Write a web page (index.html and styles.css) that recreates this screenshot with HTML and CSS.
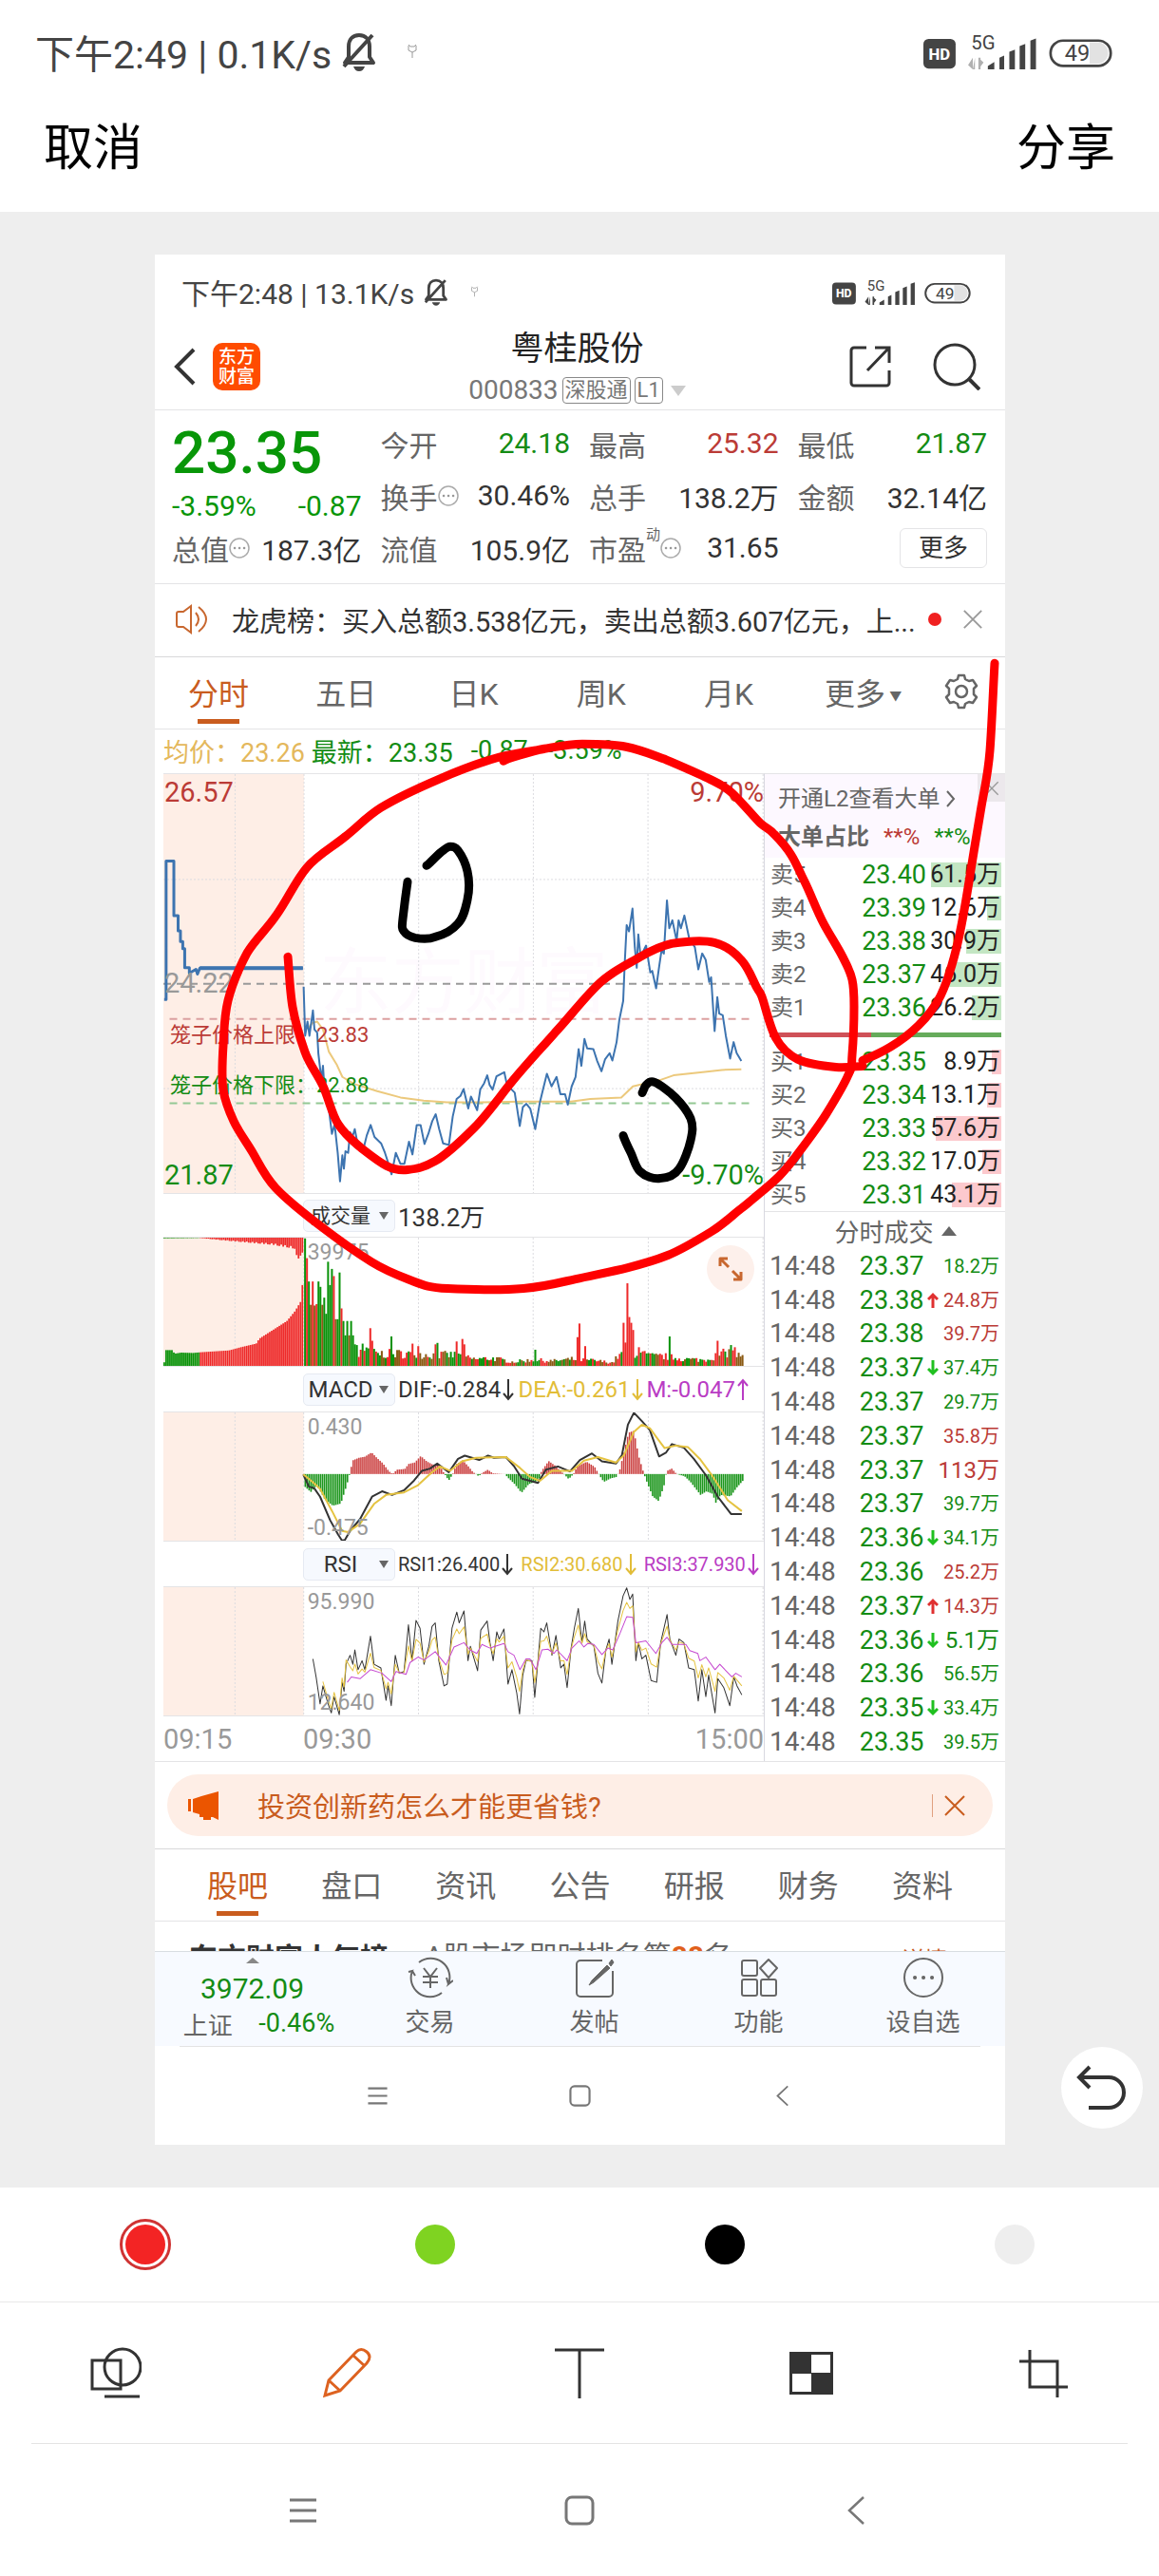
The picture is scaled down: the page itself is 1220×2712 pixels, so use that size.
FILE: index.html
```
<!DOCTYPE html><html lang="zh-CN"><head><meta charset="utf-8"/>
<meta name="viewport" content="width=device-width, initial-scale=1.0"/>
<title>编辑截图</title>
<link rel="stylesheet" href="styles.css">
<script src="script.js" defer></script>
</head>
<body>

<svg class="sprite" aria-hidden="true">
  <symbol id="i-bell" viewBox="0 0 40 42">
    <path d="M9 27V16C9 9 13 4 20 4s11 5 11 12v11l4 6H5zM34 4 4 37" fill="none" stroke="currentColor" stroke-width="4" stroke-linejoin="round"/>
    <path d="M14 37h12c-1 3-3 5-6 5s-5-2-6-5z" fill="currentColor"/>
  </symbol>
  <symbol id="i-pin" viewBox="0 0 12 16">
    <path d="M2 1l2 2h4l2-2M2 2v5l4 2 4-2V2M6 9v6" fill="none" stroke="currentColor" stroke-width="1"/>
  </symbol>
  <symbol id="i-dots" viewBox="0 0 22 22">
    <circle cx="11" cy="11" r="10" fill="none" stroke="#aaa" stroke-width="1.5"/>
    <path d="M6 11h.1M11 11h.1M16 11h.1" stroke="#999" stroke-width="2.5" stroke-linecap="round"/>
  </symbol>
  <symbol id="i-x" viewBox="0 0 24 24">
    <path d="M2 2l20 20M22 2L2 22" fill="none" stroke="currentColor" stroke-width="2"/>
  </symbol>
  <symbol id="i-down" viewBox="0 0 12 24">
    <path d="M6 1v21M1 16l5 6 5-6" fill="none" stroke="currentColor" stroke-width="2"/>
  </symbol>
  <symbol id="i-up" viewBox="0 0 12 24">
    <path d="M6 23V2M1 8l5-6 5 6" fill="none" stroke="currentColor" stroke-width="2"/>
  </symbol>
  <symbol id="i-menu" viewBox="0 0 32 32">
    <path d="M2 5h28M2 16h28M2 27h28" stroke="currentColor" stroke-width="3" fill="none"/>
  </symbol>
  <symbol id="i-home" viewBox="0 0 32 32">
    <rect x="2" y="2" width="28" height="28" rx="6" fill="none" stroke="currentColor" stroke-width="3"/>
  </symbol>
  <symbol id="i-back" viewBox="0 0 32 32">
    <path d="M24 2L9 16l15 14" fill="none" stroke="currentColor" stroke-width="2.5"/>
  </symbol>
</svg>

<header class="editor-head">
  <div class="status">
    <span>下午2:49 | 0.1K/s</span>
    <svg class="bell"><use href="#i-bell"/></svg>
    <svg class="pin"><use href="#i-pin"/></svg>
    <svg class="signal" viewBox="48 36 440 86">
      <rect x="48" y="49" width="75" height="69" rx="12" fill="currentColor"/>
      <text x="85" y="97" text-anchor="middle" font-size="37" font-weight="800" fill="#fff">HD</text>
      <text x="159" y="74" font-size="45" fill="currentColor">5G</text>
      <path d="M163 93v27l-11-10M163 120h5V93zM176 120V93l12 11M176 93h5v27h-5" fill="#b0b0b0"/>
      <path d="M198 120v-8l15-9v17zM225 120V93l11-5v32zM248 120V79l13-5v46zM272 120V66l13-5v59zM297 120V53l13-5v72z" fill="currentColor"/>
      <path d="M435 57h18a25 25 0 0 1 0 50h-18z" fill="#e2e2e2"/>
      <rect x="344" y="53" width="140" height="59" rx="29" fill="none" stroke="currentColor" stroke-width="6"/>
      <text x="406" y="101" text-anchor="middle" font-size="52" fill="currentColor">49</text>
    </svg>
  </div>
  <div class="actions">
    <button type="button">取消</button>
    <button type="button">分享</button>
  </div>
</header>

<main class="canvas">
  <div class="phone">
    <div class="status small">
      <span>下午2:48 | 13.1K/s</span>
      <svg class="bell"><use href="#i-bell"/></svg>
      <svg class="pin"><use href="#i-pin"/></svg>
      <svg class="signal" viewBox="48 36 440 86">
        <rect x="48" y="49" width="75" height="69" rx="12" fill="currentColor"/>
        <text x="85" y="97" text-anchor="middle" font-size="37" font-weight="800" fill="#fff">HD</text>
        <text x="159" y="74" font-size="45" fill="currentColor">5G</text>
        <path d="M163 93v27l-11-10M163 120h5V93zM176 120V93l12 11M176 93h5v27h-5" fill="currentColor"/>
        <path d="M198 120v-8l15-9v17zM225 120V93l11-5v32zM248 120V79l13-5v46zM272 120V66l13-5v59zM297 120V53l13-5v72z" fill="currentColor"/>
        <path d="M435 57h18a25 25 0 0 1 0 50h-18z" fill="#e2e2e2"/>
        <rect x="344" y="53" width="140" height="59" rx="29" fill="none" stroke="currentColor" stroke-width="6"/>
        <text x="406" y="101" text-anchor="middle" font-size="52" fill="currentColor">49</text>
      </svg>
    </div>

    <div class="stock-head">
      <div class="head-left">
        <button type="button" aria-label="返回"><svg width="24" height="40" viewBox="0 0 24 40"><path d="M21 2L3 20l18 18" fill="none" stroke="#333" stroke-width="4"/></svg></button>
        <button type="button" class="logo">东方<br>财富</button>
      </div>
      <div class="head-title">
        <h1>粤桂股份</h1>
        <div class="code">000833 <span class="tag">深股通</span><span class="tag">L1</span><i class="caret"></i></div>
      </div>
      <div class="head-right">
        <button type="button" aria-label="分享"><svg width="44" height="44" viewBox="0 0 44 44"><path d="M18 2H5a3 3 0 0 0-3 3v34a3 3 0 0 0 3 3h34a3 3 0 0 0 3-3V26M27 2h15v16M41 3L19 26" fill="none" stroke="#333" stroke-width="3"/></svg></button>
        <button type="button" aria-label="搜索"><svg width="50" height="50" viewBox="0 0 50 50"><circle cx="23" cy="23" r="21" fill="none" stroke="#333" stroke-width="3"/><path d="M38 38l11 11" stroke="#333" stroke-width="4"/></svg></button>
      </div>
    </div>

    <section class="quote">
      <div class="price">
        <strong>23.35</strong>
        <div class="change"><span>-3.59%</span><span>-0.87</span></div>
      </div>
      <div class="cell"><span>今开</span><b class="down">24.18</b></div>
      <div class="cell"><span>最高</span><b class="up">25.32</b></div>
      <div class="cell"><span>最低</span><b class="down">21.87</b></div>
      <div class="cell"><span>换手<svg class="dots"><use href="#i-dots"/></svg></span><b>30.46%</b></div>
      <div class="cell"><span>总手</span><b>138.2万</b></div>
      <div class="cell"><span>金额</span><b>32.14亿</b></div>
      <div class="cell"><span>总值<svg class="dots"><use href="#i-dots"/></svg></span><b>187.3亿</b></div>
      <div class="cell"><span>流值</span><b>105.9亿</b></div>
      <div class="cell"><span>市盈<sup>动</sup><svg class="dots"><use href="#i-dots"/></svg></span><b>31.65</b></div>
      <div class="cell end"><button type="button" class="more">更多</button></div>
    </section>

    <div class="notice">
      <svg width="36" height="32" viewBox="0 0 36 32"><path d="M2 10q0-2 2-2h5l8-6v28l-8-6H4q-2 0-2-2zM22 9q6 7 0 14M25 3q16 13 0 26" fill="none" stroke="#c8672f" stroke-width="2"/></svg>
      <p>龙虎榜：买入总额3.538亿元，卖出总额3.607亿元，上...</p>
      <i class="dot"></i>
      <button type="button" aria-label="关闭"><svg width="22" height="22"><use href="#i-x"/></svg></button>
    </div>

    <nav class="periods">
      <button type="button" class="on">分时</button>
      <button type="button">五日</button>
      <button type="button">日K</button>
      <button type="button">周K</button>
      <button type="button">月K</button>
      <button type="button">更多<small>▼</small></button>
      <button type="button" class="gear" aria-label="设置"><svg width="38" height="38" viewBox="0 0 38 38"><path d="M16 2h6l1 4 4 2 4-1 4 6-3 3v6l3 3-4 6-4-1-4 2-1 4h-6l-1-4-4-2-4 1-4-6 3-3v-6l-3-3 4-6 4 1 4-2z" fill="none" stroke="#666" stroke-width="2.5" stroke-linejoin="round"/><circle cx="19" cy="19" r="6" fill="none" stroke="#666" stroke-width="2.5"/></svg></button>
    </nav>

    <div class="summary">
      <span class="avg">均价：23.26</span>
      <span>最新：23.35</span>
      <span>-0.87</span>
      <span>-3.59%</span>
    </div>

    <div class="market">
      <div class="charts">
        <div class="plot plot-price">
          <span class="watermark">东方财富</span>
          <svg id="price" viewBox="28 43 1550 1324" preserveAspectRatio="none"></svg>
          <span class="lab tl up">26.57</span>
          <span class="lab tr up">9.70%</span>
          <span class="lab mid">24.22</span>
          <span class="lab bl down">21.87</span>
          <span class="lab br down">-9.70%</span>
          <span class="cage up hi">笼子价格上限：23.83</span>
          <span class="cage down lo">笼子价格下限：22.88</span>
        </div>
        <div class="bar">
          <span class="pick"><select class="cjk" aria-label="指标一"><option>成交量</option></select></span>
          <span class="total">138.2万</span>
        </div>
        <div class="plot plot-volume">
          <svg id="volume" viewBox="28 137 1502 357" preserveAspectRatio="none"></svg>
          <span class="num top">39975</span>
          <button type="button" class="expand" aria-label="展开"><svg width="26" height="26" viewBox="0 0 26 26"><path d="M2 10V2h8M2 2l9 9M24 16v8h-8M24 24l-9-9" fill="none" stroke="#c8672f" stroke-width="3"/></svg></button>
        </div>
        <div class="bar tall">
          <span class="pick"><select aria-label="指标二"><option>MACD</option></select></span>
          <span class="ind">DIF:-0.284<svg><use href="#i-down"/></svg></span>
          <span class="ind yellow">DEA:-0.261<svg><use href="#i-down"/></svg></span>
          <span class="ind purple">M:-0.047<svg><use href="#i-up"/></svg></span>
        </div>
        <div class="plot plot-macd">
          <svg id="macd" viewBox="28 616 1502 356" preserveAspectRatio="none"></svg>
          <span class="num top">0.430</span>
          <span class="num bottom">-0.475</span>
        </div>
        <div class="bar tall narrow">
          <span class="pick"><select aria-label="指标三"><option>RSI</option></select></span>
          <span class="ind">RSI1:26.400<svg><use href="#i-down"/></svg></span>
          <span class="ind yellow">RSI2:30.680<svg><use href="#i-down"/></svg></span>
          <span class="ind purple">RSI3:37.930<svg><use href="#i-down"/></svg></span>
        </div>
        <div class="plot plot-rsi">
          <svg id="rsi" viewBox="28 1096 1502 356" preserveAspectRatio="none"></svg>
          <span class="num top">95.990</span>
          <span class="num bottom">12.640</span>
        </div>
        <div class="axis"><span>09:15</span><span>09:30</span><span>15:00</span></div>
      </div>

      <aside class="book">
        <div class="level2">
          <a href="#l2">开通L2查看大单<svg width="10" height="18" viewBox="0 0 10 18"><path d="M1 1l7 8-7 8" fill="none" stroke="#666" stroke-width="2"/></svg></a>
          <div class="ratio"><b>大单占比</b><span class="up">**%</span><span class="down">**%</span></div>
          <button type="button" class="shut" aria-label="关闭"><svg width="16" height="16"><use href="#i-x"/></svg></button>
        </div>
        <table class="orders" id="asks"></table>
        <div class="balance"><i></i></div>
        <table class="orders" id="bids"></table>
        <button type="button" class="trades-head">分时成交<i></i></button>
        <table class="trades" id="trades"></table>
      </aside>
    </div>

    <div class="promo">
      <div class="pill">
        <svg width="36" height="32" viewBox="0 0 36 32"><path d="M2 9h3v13H2zM7 9l9-3 18-5v30l-6-3-2 0v3h-8v-3h-4v-3l-7-2z" fill="#eb5500"/></svg>
        <a href="#promo">投资创新药怎么才能更省钱?</a>
        <button type="button" aria-label="关闭"><svg width="24" height="24"><use href="#i-x"/></svg></button>
      </div>
    </div>

    <nav class="sections">
      <button type="button" class="on">股吧</button>
      <button type="button">盘口</button>
      <button type="button">资讯</button>
      <button type="button">公告</button>
      <button type="button">研报</button>
      <button type="button">财务</button>
      <button type="button">资料</button>
    </nav>

    <div class="rank">
      <b>东方财富人气榜</b>
      <span>A股市场即时排名第<em>88</em>名</span>
      <a href="#rank">详情&gt;&gt;</a>
    </div>

    <div class="toolbar">
      <a class="index" href="#index">
        <i></i>
        <strong>3972.09</strong>
        <span>上证</span><b>-0.46%</b>
      </a>
      <button type="button"><svg width="48" height="44" viewBox="0 0 48 44"><path d="M12 6a20 20 0 0 1 31 23l5-4M43 29l-2-7M36 38A20 20 0 0 1 5 15l-4 1M5 15l3 5" fill="none" stroke="#666" stroke-width="2"/><path d="M17 12l7 9 7-9M24 21v12M16 21h16M16 27h16" fill="none" stroke="#666" stroke-width="2"/></svg>交易</button>
      <button type="button"><svg width="42" height="44" viewBox="0 0 42 44"><path d="M29 4H6a4 4 0 0 0-4 4v30a4 4 0 0 0 4 4h30a4 4 0 0 0 4-4V15" fill="none" stroke="#666" stroke-width="2"/><path d="M34 9L18 25l-3 5 5-3 17-15zM36 7l3-4 2 3-3 4z" fill="#666" stroke="#666"/></svg>发帖</button>
      <button type="button"><svg width="42" height="44" viewBox="0 0 42 44"><g fill="none" stroke="#666" stroke-width="2"><rect x="3" y="4" width="16" height="16" rx="2"/><rect x="3" y="24" width="16" height="17" rx="2"/><rect x="23" y="24" width="16" height="17" rx="2"/><path d="M31 3l9 9-9 10-9-10z" stroke-linejoin="round"/></g></svg>功能</button>
      <button type="button"><svg width="42" height="44" viewBox="0 0 42 44"><circle cx="21" cy="22" r="20" fill="none" stroke="#666" stroke-width="2"/><path d="M12 22h.1M21 22h.1M30 22h.1" stroke="#666" stroke-width="4" stroke-linecap="round"/></svg>设自选</button>
    </div>

    <div class="keys small">
      <svg><use href="#i-menu"/></svg>
      <svg><use href="#i-home"/></svg>
      <svg><use href="#i-back"/></svg>
    </div>

    <svg class="ink" id="ink" viewBox="163 268 895 1989" preserveAspectRatio="none"></svg>
  </div>
  <button type="button" class="undo" aria-label="撤销"><svg width="54" height="48" viewBox="0 0 54 48"><path d="M14 2L3 13l11 11M3 13h31a16 16 0 0 1 0 32H13" fill="none" stroke="#333" stroke-width="4"/></svg></button>
</main>

<footer class="panel">
  <div class="palette">
    <label><input type="radio" name="ink" class="red" checked aria-label="红色"></label>
    <label><input type="radio" name="ink" class="green" aria-label="绿色"></label>
    <label><input type="radio" name="ink" class="black" aria-label="黑色"></label>
    <label><input type="radio" name="ink" class="grey" aria-label="浅灰"></label>
  </div>
  <div class="tools">
    <button type="button" aria-label="形状"><svg viewBox="0 0 54 54"><path d="M2 14h30v30H2z"/><circle cx="34" cy="21" r="19"/><path d="M15 52h37"/></svg></button>
    <button type="button" aria-label="画笔" class="on"><svg viewBox="0 0 54 54"><path d="M3 51l4-16L36 5q5-5 11 0t0 12L19 46zM7 35l12 11M33 9l12 11"/></svg></button>
    <button type="button" aria-label="文字"><svg viewBox="0 0 54 54"><path d="M1 3h52M27 3v51"/></svg></button>
    <button type="button" aria-label="马赛克"><svg viewBox="0 0 54 54"><path d="M4 5h46v45H4z" fill="#333" stroke="none"/><path d="M27 8h20v19H27zM7 28h20v19H7z" fill="#fff" stroke="none"/></svg></button>
    <button type="button" aria-label="裁剪"><svg viewBox="0 0 54 54"><path d="M13 3v39h40M2 15h40v38"/></svg></button>
  </div>
  <div class="keys">
    <svg><use href="#i-menu"/></svg>
    <svg><use href="#i-home"/></svg>
    <svg><use href="#i-back"/></svg>
  </div>
</footer>

</body>
</html>
```
FILE: styles.css
```
* {
  box-sizing: border-box;
}
body {
  margin: 0;
  font-family: Roboto, "Noto Sans CJK SC", sans-serif;
  color: #333;
  background: #fff;
  --red: #bb3b36;
  --green: #148c14;
  --orange: #c95c1e;
  --line: #e4e4e6;
}
button {
  border: 0;
  padding: 0;
  background: none;
  font: inherit;
  color: inherit;
}
a {
  color: inherit;
  text-decoration: none;
}
i {
  display: block;
}
svg {
  display: block;
}
table {
  width: 100%;
  border-collapse: collapse;
}
.sprite {
  position: absolute;
  width: 0;
  height: 0;
}
.up {
  color: var(--red);
}
.down {
  color: var(--green);
}

/* status bar, used by the editor and by the phone */
.status {
  display: flex;
  align-items: center;
  height: 108px;
  padding: 0 49px 0 37px;
  font-size: 41px;
  color: #444;
  white-space: nowrap;
}
.status .bell {
  width: 40px;
  height: 42px;
  margin-left: 9px;
}
.status .pin {
  width: 12px;
  height: 16px;
  margin-left: 30px;
  color: #999;
}
.status .signal {
  width: 199px;
  height: 39px;
  margin-left: auto;
}
.status.small {
  height: 72px;
  padding: 6px 36px 0 28px;
  font-size: 30px;
}
.status.small .bell {
  width: 28px;
  height: 30px;
}
.status.small .pin {
  margin-left: 22px;
  width: 9px;
}
.status.small .signal {
  width: 146px;
  height: 29px;
}
.actions {
  display: flex;
  justify-content: space-between;
  align-items: center;
  height: 115px;
  padding: 0 46px 28px;
  font-size: 52px;
  color: #000;
}

/* canvas */
.canvas {
  position: relative;
  padding: 45px 162px 45px 163px;
  background: #eee;
}
.phone {
  position: relative;
  background: #fff;
}
.ink {
  position: absolute;
  inset: 0;
  width: 100%;
  height: 100%;
  fill: none;
  stroke: #f00;
  stroke-width: 9;
  stroke-linecap: round;
  stroke-linejoin: round;
  pointer-events: none;
}
.ink .black {
  stroke: #000;
}
.undo {
  position: absolute;
  right: 17px;
  bottom: 62px;
  display: grid;
  place-items: center;
  width: 86px;
  height: 86px;
  border-radius: 50%;
  background: #fff;
}

/* stock header */
.stock-head {
  display: grid;
  grid-template-columns: 1fr auto 1fr;
  align-items: center;
  height: 92px;
  padding: 0 26px 10px 20px;
  border-bottom: 1px solid var(--line);
}
.head-left, .head-right {
  display: flex;
  align-items: center;
  gap: 17px;
}
.head-right {
  justify-content: flex-end;
  gap: 44px;
}
.logo {
  width: 50px;
  height: 50px;
  border-radius: 10px;
  background: #ff4c00;
  color: #fff;
  font-size: 19px;
  font-weight: 500;
  line-height: 21px;
}
.head-title {
  padding-top: 6px;
  text-align: center;
}
h1 {
  margin: 0;
  font-size: 35px;
  font-weight: 400;
  line-height: 44px;
  color: #222;
}
.code {
  display: flex;
  align-items: center;
  gap: 4px;
  font-size: 28px;
  line-height: 42px;
  color: #777;
}
.tag {
  padding: 0 2px;
  border: 1px solid #888;
  border-radius: 4px;
  font-size: 22px;
  line-height: 26px;
}
.caret {
  margin-left: 4px;
  border: 8px solid transparent;
  border-top: 11px solid #ccc;
  border-bottom: 0;
}

/* quote */
.quote {
  display: grid;
  grid-template-columns: repeat(4, 1fr);
  grid-template-rows: repeat(3, 55px);
  column-gap: 20px;
  height: 183px;
  padding: 7px 19px 0 18px;
  border-bottom: 1px solid var(--line);
  font-size: 30px;
}
.price {
  grid-row: 1 / 3;
  color: #089608;
}
.price strong {
  display: block;
  font-size: 62px;
  line-height: 76px;
  font-weight: 500;
}
.change {
  display: flex;
  justify-content: space-between;
  line-height: 36px;
}
.cell {
  display: flex;
  justify-content: space-between;
  align-items: center;
  white-space: nowrap;
}
.cell span {
  display: flex;
  align-items: center;
  color: #666;
}
.cell b {
  font-weight: 400;
}
.cell sup {
  align-self: flex-start;
  font-size: 15px;
  line-height: 16px;
}
.cell.end {
  justify-content: flex-end;
}
.dots {
  width: 22px;
  height: 22px;
}
.more {
  width: 92px;
  height: 42px;
  border: 1px solid var(--line);
  border-radius: 6px;
  font-size: 26px;
  line-height: 36px;
}

.notice {
  display: flex;
  align-items: center;
  height: 77px;
  padding: 0 23px 2px 21px;
  border-bottom: 1px solid #d8d8da;
}
.notice p {
  flex: 1;
  margin: 0 0 0 24px;
  font-size: 29px;
  white-space: nowrap;
}
.notice .dot {
  width: 14px;
  height: 14px;
  margin-right: 22px;
  border-radius: 50%;
  background: #f02020;
}
.notice button {
  color: #999;
}

/* tabs */
.periods, .sections {
  display: flex;
  height: 76px;
  border-bottom: 1px solid var(--line);
  font-size: 32px;
  color: #666;
}
.periods button, .sections button {
  padding-bottom: 3px;
}
.periods button {
  width: 15%;
}
.periods button:nth-child(6) {
  flex: 1;
  padding-right: 10px;
}
.periods small {
  margin-left: 4px;
  font-size: 13px;
  vertical-align: 5px;
}
.periods .gear {
  width: auto;
  margin-right: 27px;
}
.sections {
  padding: 0 27px;
}
.sections button {
  flex: 1;
}
.periods .on, .sections .on {
  color: var(--orange);
  background: linear-gradient(var(--orange), var(--orange)) center bottom 5px / 44px 5px no-repeat;
}

.summary {
  display: flex;
  align-items: center;
  height: 46px;
  padding: 0 0 2px 9px;
  gap: 19px;
  font-size: 27px;
  color: var(--green);
}
.summary .avg {
  margin-right: -12px;
  color: #e4b85c;
}

/* charts and order book */
.market {
  display: grid;
  grid-template-columns: 641fr 254fr;
  border-bottom: 1px solid var(--line);
}
.charts {
  min-width: 0;
  padding-left: 9px;
}
.plot {
  position: relative;
  border: solid var(--line);
  border-width: 1px 0;
}
.plot > svg {
  position: relative;
  width: 100%;
  height: 100%;
}
.plot-price {
  height: 443px;
}
.plot-volume, .plot-macd, .plot-rsi {
  height: 137px;
}
.plot path, .plot line {
  fill: none;
  stroke-width: 2;
  vector-effect: non-scaling-stroke;
  stroke-linejoin: round;
}
.plot .expand path {
  stroke-width: 3;
}
.plot .grid {
  stroke: #dcdce0;
  stroke-width: 1;
  stroke-dasharray: 2 2;
}
.plot .wash {
  fill: #feeee6;
}
.plot .dash {
  stroke-dasharray: 8 6;
}
.lab, .cage, .num, .watermark {
  position: absolute;
  line-height: 1;
}
.lab {
  font-size: 29px;
}
.tl, .mid, .bl {
  left: 1px;
}
.tr, .br {
  right: 0;
}
.tl, .tr {
  top: 5px;
}
.bl, .br {
  bottom: 4px;
}
.mid {
  top: 206px;
  color: #999;
}
.cage {
  left: 7px;
  font-size: 22px;
}
.hi {
  top: 264px;
}
.lo {
  top: 317px;
}
.num {
  left: 24%;
  font-size: 23px;
  color: #999;
}
.num.top {
  top: 4px;
}
.num.bottom {
  bottom: 2px;
}
.watermark {
  left: 26%;
  top: 182px;
  font-size: 76px;
  color: #fefafe;
}
.expand {
  position: absolute;
  right: 10px;
  top: 8px;
  display: grid;
  place-items: center;
  width: 50px;
  height: 50px;
  border-radius: 50%;
  background: #fdf0eb;
}
.bar {
  display: grid;
  grid-template-columns: 97px repeat(3, 1fr);
  align-items: center;
  column-gap: 3px;
  height: 45px;
  padding-left: 147px;
}
.bar.tall {
  height: 47px;
}
.pick {
  position: relative;
}
.pick select {
  width: 100%;
  height: 34px;
  padding: 0 20px 0 2px;
  border: 1px solid #e6eaf2;
  border-radius: 5px;
  background: #f6f9fe;
  appearance: none;
  text-align: center;
  text-align-last: center;
  font: 24px Roboto, "Noto Sans CJK SC", sans-serif;
  color: #333;
}
.pick .cjk {
  font-size: 21px;
}
.pick::after {
  content: "";
  position: absolute;
  right: 7px;
  top: 13px;
  border: 5px solid transparent;
  border-top: 8px solid #666;
  border-bottom: 0;
}
.total {
  font-size: 26px;
}
.ind {
  display: flex;
  align-items: center;
  gap: 2px;
  font-size: 24px;
  white-space: nowrap;
}
.ind svg {
  width: 12px;
  height: 24px;
}
.narrow .ind {
  font-size: 20px;
}
.yellow {
  color: #e2bd38;
}
.purple {
  color: #b93cc4;
}
.axis {
  display: flex;
  align-items: center;
  height: 47px;
  font-size: 29px;
  color: #999;
}
.axis span:first-child {
  width: 147px;
}
.axis span:last-child {
  margin-left: auto;
}

.book {
  min-width: 0;
  border-left: 1px solid #d8d8e0;
  border-top: 1px solid var(--line);
  color: #666;
  white-space: nowrap;
}
.level2 {
  position: relative;
  height: 88px;
  padding: 6px 0 0 14px;
  background: #fdf8ff;
}
.level2 a {
  display: flex;
  align-items: center;
  gap: 7px;
  font-size: 24px;
  line-height: 40px;
}
.ratio {
  display: flex;
  gap: 15px;
  font-size: 24px;
  line-height: 40px;
}
.shut {
  position: absolute;
  right: 0;
  top: 0;
  display: grid;
  place-items: center;
  width: 29px;
  height: 29px;
  border-radius: 0 0 0 8px;
  background: #ece8ec;
  color: #999;
}
.orders td {
  height: 35px;
  padding: 0;
  line-height: 34px;
}
.orders td:first-child {
  padding-left: 6px;
  font-size: 24px;
}
.orders .rate, .trades .rate {
  text-align: right;
  font-size: 27px;
  color: var(--green);
}
.orders .vol {
  position: relative;
  width: 83px;
  padding-right: 5px;
  text-align: right;
  font-size: 25px;
  color: #222;
}
.orders .vol span {
  position: relative;
}
.depth {
  position: absolute;
  right: 4px;
  top: 5px;
  height: 26px;
  background: #fcc9cd;
}
#asks .depth {
  background: #c3e6c3;
}
.balance {
  margin: 9px 4px 8px 5px;
  height: 5px;
  background: #66ab5b;
}
.balance i {
  width: 44%;
  height: 5px;
  background: #cf5158;
}
.trades-head {
  display: flex;
  justify-content: center;
  align-items: center;
  gap: 8px;
  width: 100%;
  height: 40px;
  padding-left: 22px;
  border-top: 1px solid var(--line);
  font-size: 26px;
}
.trades-head i {
  border: 8px solid transparent;
  border-bottom: 10px solid #666;
  border-top: 0;
}
.trades {
  height: 537px;
}
.trades td {
  padding: 0;
  font-size: 28px;
  line-height: 34px;
}
.trades td:first-child {
  padding-left: 5px;
}
.trades .arrow {
  width: 15px;
  padding-left: 3px;
}
.trades .arrow svg {
  width: 12px;
  height: 18px;
}
.trades .arrow path {
  fill: none;
  stroke: #e03030;
  stroke-width: 3;
}
.trades .arrow .fall {
  stroke: #20c020;
}
.trades .lot {
  width: 66px;
  padding-right: 6px;
  text-align: right;
  font-size: 20px;
}
.trades .big {
  font-size: 24px;
}

/* promo */
.promo {
  height: 92px;
  padding: 13px 13px 0;
  border-bottom: 1px solid #d8d8da;
}
.pill {
  display: flex;
  align-items: center;
  height: 65px;
  padding: 0 28px 0 20px;
  border-radius: 33px;
  background: #feeee6;
  color: var(--orange);
  font-size: 29px;
}
.pill a {
  margin: 0 auto 2px 39px;
}
.pill button {
  padding: 0 0 0 11px;
  border-left: 1px solid #e0a080;
}
.rank {
  display: flex;
  height: 31px;
  padding: 19px 36px 0;
  overflow: hidden;
  font-size: 30px;
  line-height: 40px;
}
.rank span {
  margin-left: 38px;
  font-size: 30px;
  line-height: 36px;
  color: #666;
}
.rank em {
  font-style: normal;
  font-weight: 700;
  color: #e0601c;
}
.rank a {
  margin-left: auto;
  font-size: 24px;
  line-height: 44px;
  color: var(--orange);
}

/* bottom bar */
.toolbar {
  display: grid;
  grid-template-columns: 203px repeat(4, 1fr);
  height: 100px;
  border-top: 1px solid #d8dde2;
  background: #f7faff;
  color: #666;
}
.index {
  display: grid;
  grid-template-columns: auto auto;
  grid-template-rows: 14px 44px 30px;
  align-items: center;
  justify-items: center;
  padding: 2px 0 0 16px;
  font-size: 26px;
}
.index i {
  grid-column: 1 / 3;
  border: 7px solid transparent;
  border-bottom: 6px solid #888;
  border-top: 0;
  margin-right: 14px;
}
.index strong {
  grid-column: 1 / 3;
  margin-right: 14px;
  font-size: 30px;
  font-weight: 400;
  color: var(--green);
}
.index b {
  font-size: 27px;
  font-weight: 400;
  color: var(--green);
}
.toolbar button {
  display: flex;
  flex-direction: column;
  align-items: center;
  gap: 7px;
  padding-top: 5px;
  font-size: 26px;
  line-height: 36px;
}

/* system keys */
.keys {
  display: flex;
  justify-content: space-between;
  align-items: center;
  height: 141px;
  margin: 0 33px 0 33px;
  padding: 0 270px;
  border-top: 1px solid #e4e4e4;
  color: #777;
}
.keys svg {
  width: 32px;
  height: 32px;
}
.keys.small {
  height: 104px;
  margin: 0 26px;
  padding: 0 197px;
}
.keys.small svg {
  width: 23px;
  height: 23px;
}

/* drawing tools */
.palette {
  display: flex;
  align-items: center;
  height: 121px;
  border-bottom: 1px solid #e8e8e8;
}
.palette label {
  flex: 1;
  display: grid;
  place-items: center;
}
.palette input {
  width: 42px;
  height: 42px;
  margin: 0;
  border-radius: 50%;
  appearance: none;
}
.palette input:checked {
  outline: 3px solid #cf3333;
  outline-offset: 3px;
}
.red {
  background: #f32424;
}
.green {
  background: #7fd321;
}
.palette .black {
  background: #000;
}
.grey {
  background: #eee;
}
.tools {
  display: flex;
  height: 148px;
}
.tools button {
  flex: 1;
  display: grid;
  place-items: center;
}
.tools svg {
  width: 54px;
  height: 54px;
  fill: none;
  stroke: #333;
  stroke-width: 3;
}
.tools .on svg {
  stroke: #dd6220;
}
```
FILE: script.js
```
const el = id => document.getElementById(id)

const toPoints = s => s.trim().split(/\s+/).map(p => p.split(',').map(Number))

const line = (s, color, width = 2) =>
  `<path d="M${s.trim().replace(/\s+/g, 'L')}" stroke="${color}" style="stroke-width:${width}px"/>`

// value at x on a list of [x, y] keys
const at = function(keys, x) {
  for (let i = 1; i < keys.length; i++) {
    const [x0, y0] = keys[i - 1]
    const [x1, y1] = keys[i]
    if (x <= x1) return y0 + (y1 - y0) * (x - x0) / (x1 - x0)
  }
  return keys[keys.length - 1][1]
}

const rect = (x, y, w, h, color) =>
  `<rect x="${x.toFixed(1)}" y="${y.toFixed(1)}" width="${w}" height="${h.toFixed(1)}" fill="${color}"/>`

const grid = function(xs, top, height, right) {
  let s = `<rect class="wash" x="28" y="${top}" width="${right}" height="${height}"/>`
  for (const x of xs) {
    s += `<line class="grid" x1="${x}" x2="${x}" y1="${top}" y2="${top + height}"/>`
  }
  return s
}

const drawPrice = function() {
  let s = grid([213, 391, 687, 983, 1279, 1576], 43, 1324, 363)
  for (const y of [376, 1037]) {
    s += `<line class="grid" x1="28" x2="1578" y1="${y}" y2="${y}"/>`
  }
  s += '<line class="dash" x1="28" x2="1578" y1="706" y2="706" stroke="#999"/>'
  s += '<line class="dash" x1="44" x2="1552" y1="817" y2="817" stroke="#dba0a0"/>'
  s += '<line class="dash" x1="44" x2="1552" y1="1083" y2="1083" stroke="#94c894"/>'
  s += line('30,755 35,755 35,318 55,318 55,490 66,490 66,538 72,538 72,572 78,572 78,595 83,595 83,655 95,655 95,672 112,660 116,675 122,656 388,656', '#3d74b0', 3)
  s += line('122,656 388,656', '#3d74b0', 4)
  s += line('400,850 412,830 425,825 440,850 455,920 475,960 490,1000 520,1022 580,1045 640,1065 700,1075 760,1080 850,1080 950,1078 1080,1078 1130,1070 1210,1065 1240,1030 1310,1010 1345,995 1420,985 1470,978 1520,976', '#ecc97c')
  s += line(`390,715 394,870 400,825 405,870 414,790 418,850 425,860 428,925 436,1010 440,965 445,1060 455,1100 463,1180 470,1150 478,1240
    484,1330 490,1248 494,1290 498,1235 505,1240 510,1175 516,1190 522,1165 530,1215 545,1225 553,1185 563,1152 573,1190 590,1210 600,1240
    608,1270 617,1308 628,1240 640,1275 650,1275 662,1205 671,1245 682,1152 692,1152 702,1212 712,1180 722,1140 731,1118 740,1165 750,1210
    765,1215 775,1125 785,1070 795,1060 803,1038 815,1100 822,1062 838,1105 846,1040 856,1020 864,995 870,1025 878,1040 888,998 908,985
    915,1025 935,1050 948,1155 956,1095 965,1085 975,1100 988,1165 1000,1080 1008,1040 1018,990 1030,1030 1043,1000 1053,1055 1065,1055
    1072,1088 1082,1030 1092,1000 1100,912 1107,965 1115,880 1122,910 1138,912 1148,950 1159,982 1168,945 1180,925 1187,948 1198,890
    1205,820 1215,760 1219,640 1224,520 1230,540 1239,468 1245,590 1250,655 1254,550 1260,620 1274,585 1285,670 1290,665 1300,720 1308,650
    1314,600 1320,610 1328,442 1334,530 1342,505 1353,570 1358,505 1364,530 1373,490 1385,560 1400,590 1409,660 1419,610 1428,630 1437,700
    1442,685 1451,855 1458,748 1463,800 1472,805 1480,870 1491,942 1500,890 1508,925 1520,950`, '#3d74b0')
  el('price').innerHTML = s
}

const RED = '#ee2a2a'
const GREEN = '#0a930a'
const MIX = '#8b5a14'

const drawVolume = function() {
  const base = 494
  let s = grid([207, 379, 666, 953, 1241, 1528], 137, 357, 351)

  // call auction, matched below and unmatched above
  const low = toPoints('28,10 32,44 48,44 54,34 70,37 100,36 120,38 190,43 220,52 258,62 266,76 300,100 335,125 355,152 370,180 374,230')
  const high = toPoints('28,2 118,1 180,8 240,14 300,20 350,30 368,66 374,40')
  for (let x = 28; x < 375; x += 4.8) {
    const color = x < 118 ? GREEN : RED
    const h = at(low, x)
    s += rect(x, base - h, 4.2, h, color)
    s += rect(x, 137, 4.2, at(high, x) * (Math.round(x) % 3 ? 1 : .8), color)
  }

  const first = '355g 300r 235g 170m 235r 168m 172r 235g 220g 170m 190g 145g 290g 225g 270g 250r 130m 130g 260g 160r 125g 85g 125g 85m 125g 85g 60g 58g 25r 45r 62g 42r'.split(' ')
  const env = toPoints('500,60 560,45 640,45 700,40 760,40 800,25 850,28 900,15 950,22 1000,18 1050,25 1100,20 1150,12 1165,40 1210,48 1250,35 1280,35 1330,25 1380,22 1410,38 1440,52 1478,30')
  const spikes = toPoints('545,105 550,70 598,82 650,62 664,55 705,60 712,64 760,68 775,75 780,60 957,45 1062,80 1067,118 1083,55 1178,120 1183,65 1188,230 1192,136 1197,120 1202,100 1216,52 1292,82 1412,70 1447,58 1457,52')
  let seed = 7
  const rnd = () => (seed = seed * 16807 % 2147483647) / 2147483647
  for (let i = 0, x = 380; x < 1476; i++, x += 4.8) {
    let h = at(env, x) * (.45 + rnd() * .6)
    let color = [RED, GREEN, MIX][Math.floor(rnd() * 3)]
    if (i < first.length) {
      h = parseInt(first[i])
      color = { r: RED, g: GREEN, m: MIX }[first[i].slice(-1)]
    }
    for (const [sx, sh] of spikes) {
      if (Math.abs(sx - x) < 2.4) {
        h = sh
        color = [598, 957, 1292, 712, 1447].includes(sx) ? GREEN : RED
      }
    }
    s += rect(x, base - h, 4.8, h, color)
  }
  el('volume').innerHTML = s
}

const drawMacd = function() {
  let s = grid([207, 379, 666, 953, 1241, 1528], 616, 356, 351)
  const hist = toPoints(`380,-35 395,-50 410,-30 430,-70 450,-88 470,-82 485,-30 492,0 500,38 515,45 530,48 547,60 560,45 575,30 590,8 600,0
    610,12 630,14 640,28 655,32 670,50 685,35 700,26 715,28 725,8 740,-18 750,0 760,28 775,38 790,20 800,6 815,-6 825,4 838,12 850,2 880,0
    890,-12 905,-28 922,-52 940,-28 965,-18 972,8 990,36 1005,24 1020,8 1030,-2 1040,-14 1052,0 1062,22 1085,34 1105,20 1115,0 1128,-22
    1145,-12 1160,-8 1168,12 1180,70 1190,115 1203,120 1215,50 1227,5 1235,-20 1250,-62 1265,-75 1278,-35 1285,8 1298,15 1310,0 1330,-6
    1345,-22 1370,-58 1385,-48 1400,-55 1408,-80 1420,-58 1445,-62 1460,-38 1478,-16`)
  for (let x = 381; x < 1478; x += 4.8) {
    const v = at(hist, x)
    s += rect(x, v > 0 ? 787 - v : 787, 3.8, Math.abs(v), v > 0 ? '#cc4444' : '#1c961c')
  }
  s += line(`378,788 392,822 405,826 420,850 445,915 465,955 475,972 482,970 495,945 520,912 550,850 575,835 600,845 630,832 655,805 675,778
    695,772 713,758 742,782 765,745 782,736 818,748 840,736 855,742 885,740 905,765 925,800 965,812 985,775 1015,766 1045,780 1070,748
    1100,730 1125,752 1160,758 1175,735 1190,650 1205,617 1225,640 1245,665 1268,738 1285,728 1300,704 1330,714 1355,745 1385,790 1415,850
    1448,898 1475,898`, '#333')
  s += line(`378,788 400,808 420,828 450,890 475,945 490,948 520,925 555,870 585,845 630,838 665,818 700,782 720,766 745,778 775,752 810,742
    885,740 920,770 945,795 970,806 1000,778 1050,778 1080,750 1115,740 1160,755 1180,735 1205,670 1225,650 1245,660 1265,690 1282,715
    1310,708 1340,712 1370,745 1400,790 1440,860 1475,890`, '#e5c341')
  el('macd').innerHTML = s
}

const drawRsi = function() {
  const fast = `402,1295 410,1345 420,1420 427,1370 440,1420 448,1445 455,1400 468,1450 475,1360 480,1385 485,1310 495,1285 502,1310
    507,1270 515,1325 525,1300 532,1325 546,1232 555,1310 572,1320 585,1410 590,1370 598,1425 608,1285 618,1335 630,1330 641,1200 650,1300
    660,1188 670,1210 680,1310 692,1260 700,1205 708,1195 717,1300 730,1370 738,1365 750,1210 762,1165 768,1195 780,1162 790,1300 796,1260
    814,1328 822,1215 838,1190 845,1250 853,1300 862,1220 868,1240 880,1212 890,1365 900,1325 912,1390 919,1448 927,1340 935,1300 950,1300
    957,1402 965,1300 972,1210 980,1220 987,1195 1000,1285 1010,1230 1022,1320 1030,1310 1038,1375 1048,1265 1056,1210 1066,1155 1075,1250
    1082,1190 1088,1240 1105,1260 1115,1335 1125,1362 1135,1270 1143,1240 1150,1310 1165,1190 1178,1120 1187,1098 1195,1130 1202,1115
    1210,1300 1216,1250 1225,1295 1235,1285 1248,1355 1262,1360 1272,1250 1288,1172 1295,1240 1310,1285 1318,1240 1330,1250 1342,1320
    1356,1325 1366,1412 1375,1325 1385,1400 1392,1340 1408,1445 1415,1350 1430,1375 1445,1425 1455,1345 1463,1370 1475,1395`
  const slow = `488,1360 498,1345 520,1350 546,1325 575,1335 598,1358 610,1330 635,1338 645,1305 665,1290 680,1298 708,1275 735,1312
    755,1262 780,1250 795,1270 812,1280 825,1255 845,1265 880,1252 890,1275 905,1285 920,1325 935,1295 945,1295 960,1325 975,1270 990,1268
    1005,1280 1012,1270 1038,1300 1050,1265 1068,1245 1080,1262 1090,1252 1105,1255 1125,1283 1140,1265 1152,1270 1170,1225 1187,1178
    1202,1180 1210,1250 1235,1245 1260,1280 1275,1250 1288,1235 1300,1255 1335,1255 1345,1272 1365,1280 1370,1300 1385,1290 1408,1325
    1420,1310 1450,1345 1460,1335 1475,1345`
  // middle line runs half way between the fast and the slow one
  const keys = toPoints(slow)
  const mid = toPoints(fast).filter(p => p[0] > 425)
    .map(([x, y]) => x < 488 ? [x, y - 12] : [x, Math.round((y + at(keys, x)) / 2)])
    .map(p => p.join()).join(' ')
  el('rsi').innerHTML = grid([207, 379, 666, 953, 1241, 1528], 1096, 356, 351) +
    line(fast, '#333', 1) + line(mid, '#e5c341', 1) + line(slow, '#c548d0', 1)
}

// hand-drawn strokes, smoothed through their points
const stroke = function(s, cls) {
  const p = toPoints(s)
  let d = 'M' + p[0]
  for (let i = 0; i < p.length - 1; i++) {
    const a = p[i - 1] || p[i], b = p[i], c = p[i + 1], e = p[i + 2] || c
    const c1 = [b[0] + (c[0] - a[0]) / 6, b[1] + (c[1] - a[1]) / 6]
    const c2 = [c[0] - (e[0] - b[0]) / 6, c[1] - (e[1] - b[1]) / 6]
    d += `C${c1.map(Math.round)} ${c2.map(Math.round)} ${c}`
  }
  return `<path class="${cls}" d="${d}"/>`
}

const drawInk = function() {
  el('ink').innerHTML =
    stroke(`530,801 540,797 573,788 613,783 659,786 700,799 745,819 770,834 800,866 815,878 833,900 847,928 867,972 887,1007 897,1031 899,1059 897,1110
      893,1131 870,1172 843,1210 820,1238 797,1258 780,1272 749,1296 703,1321 661,1334 606,1346 551,1356 471,1356 434,1348 391,1328
      337,1290 290,1250 266,1213 246,1180 235,1147 235,1100 240,1053 260,1003 291,963 323,913 364,880 401,850 462,820 525,797 573,788`) +
    stroke(`303,1007 308,1060 321,1107 340,1143 356,1183 380,1208 407,1227 429,1231 458,1222 499,1187 540,1137 584,1087 633,1033 674,1007
      707,993 752,992 780,1010 797,1040 803,1052 817,1093 840,1115 880,1123 908,1122`) +
    stroke('908,1116 937,1102 967,1079 990,1048 1007,997 1020,928 1033,849 1042,790 1047,698') +
    stroke('429,928 424,967 425,980 437,987 458,986 482,972 492,947 492,917 482,895 474,891 464,897 449,911', 'black') +
    stroke('676,1150 680,1142 689,1139 711,1155 727,1177 727,1200 715,1230 695,1240 674,1233 664,1213 656,1195', 'black')
}

const fillOrders = function(id, rows) {
  el(id).innerHTML = rows.map(([name, rate, vol, w]) =>
    `<tr><td>${name}</td><td class="rate">${rate}</td><td class="vol"><i class="depth" style="width:${w}px"></i><span>${vol}万</span></td></tr>`
  ).join('')
}

const fillTrades = function() {
  // price, arrow, lot, side
  const rows = [
    ['23.37', '', '18.2', 'down'], ['23.38', 'up', '24.8', 'up'], ['23.38', '', '39.7', 'up'],
    ['23.37', 'down', '37.4', 'down'], ['23.37', '', '29.7', 'down'], ['23.37', '', '35.8', 'up'],
    ['23.37', '', '113', 'up'], ['23.37', '', '39.7', 'down'], ['23.36', 'down', '34.1', 'down'],
    ['23.36', '', '25.2', 'up'], ['23.37', 'up', '14.3', 'up'], ['23.36', 'down', '5.1', 'down'],
    ['23.36', '', '56.5', 'down'], ['23.35', 'down', '33.4', 'down'], ['23.35', '', '39.5', 'down'],
  ]
  const arrow = {
    '': '',
    up: '<svg viewBox="0 0 12 18"><path d="M6 17V3M1 8l5-5 5 5"/></svg>',
    down: '<svg viewBox="0 0 12 18"><path class="fall" d="M6 1v14M1 10l5 5 5-5"/></svg>',
  }
  el('trades').innerHTML = rows.map(([rate, dir, lot, side]) =>
    `<tr><td>14:48</td><td class="rate">${rate}</td><td class="arrow">${arrow[dir]}</td><td class="lot ${side}${lot.length < 4 ? ' big' : ''}">${lot}万</td></tr>`
  ).join('')
}

drawPrice()
drawVolume()
drawMacd()
drawRsi()
drawInk()
fillOrders('asks', [['卖5', '23.40', '61.5', 74], ['卖4', '23.39', '12.6', 15], ['卖3', '23.38', '30.9', 37], ['卖2', '23.37', '46.0', 55], ['卖1', '23.36', '26.2', 31]])
fillOrders('bids', [['买1', '23.35', '8.9', 10], ['买2', '23.34', '13.1', 15], ['买3', '23.33', '57.6', 69], ['买4', '23.32', '17.0', 20], ['买5', '23.31', '43.1', 52]])
fillTrades()
```
